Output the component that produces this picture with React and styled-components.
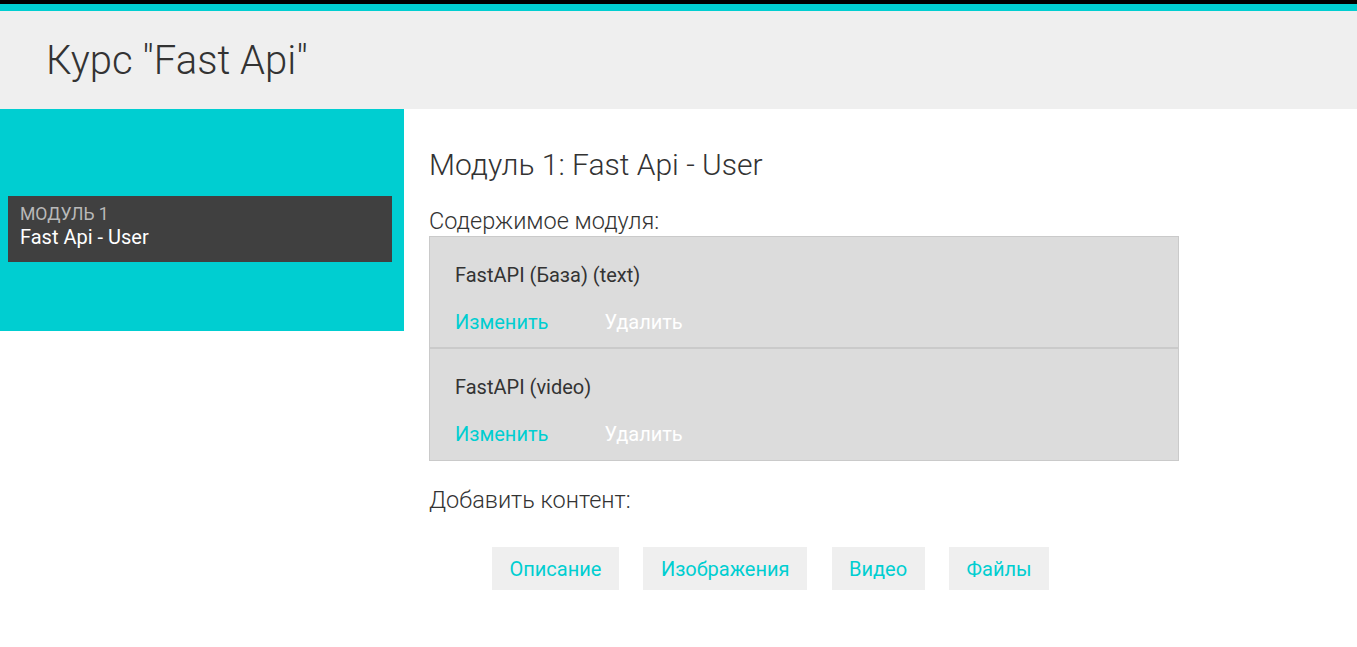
import React from "react";
import styled, { createGlobalStyle } from "styled-components";

const Global = createGlobalStyle`
  html, body { margin: 0; padding: 0; background: #fff; }
  body { font-family: Roboto, "Noto Sans", sans-serif; color: #333; }
  * { box-sizing: border-box; }
`;

const CYAN = "#00ced1";

const Page = styled.div`
  border-top: 4px solid #000;
  min-height: 647px;
`;

const Header = styled.header`
  border-top: 7px solid ${CYAN};
  background: #efefef;
  height: 105px;
  display: flex;
  align-items: center;
  padding-left: 46px;
`;

const Title = styled.h1`
  margin: 0;
  font-weight: 300;
  font-size: 40px;
  color: #333;
`;

const Body = styled.div`
  display: flex;
  align-items: flex-start;
`;

const Sidebar = styled.aside`
  width: 404px;
  flex: none;
  height: 222px;
  background: ${CYAN};
  padding: 87px 12px 0 8px;
`;

const ModuleCard = styled.div`
  background: #404040;
  height: 66px;
  padding: 8px 12px 0;
  display: flex;
  flex-direction: column;
`;

const ModuleLabel = styled.span`
  color: #b9b9b9;
  font-size: 17.6px;
  line-height: 21px;
`;

const ModuleName = styled.span`
  color: #fff;
  font-size: 20px;
  line-height: 25px;
`;

const Main = styled.main`
  padding: 37px 0 0 25px;
  width: 1000px;
`;

const Heading = styled.h2`
  margin: 0;
  font-weight: 300;
  font-size: 30px;
  line-height: 38px;
  color: #333;
`;

const Label = styled.div`
  font-weight: 300;
  font-size: 23.5px;
  line-height: 29px;
  color: #333;
  margin-top: ${(p) => p.$mt}px;
`;

const ContentBox = styled.div`
  width: 750px;
  background: #dcdcdc;
  border: 1px solid #cacaca;
`;

const Item = styled.div`
  height: ${(p) => p.$h}px;
  padding: 25px 25px 0;
  & + & {
    border-top: 2px solid #cacaca;
  }
`;

const ItemTitle = styled.div`
  font-size: 20px;
  line-height: 26px;
  color: #333;
`;

const Actions = styled.div`
  display: flex;
  gap: 56px;
  margin-top: 21px;
`;

const ActionLink = styled.a`
  font-size: 20px;
  line-height: 26px;
  color: ${(p) => (p.$danger ? "#fff" : CYAN)};
  text-decoration: none;
  cursor: pointer;
`;

const ButtonRow = styled.div`
  display: flex;
  gap: 24.5px;
  padding-left: 63px;
  margin-top: 32px;
`;

const AddButton = styled.button`
  height: 43px;
  padding: 0 17.5px;
  border: none;
  background: #efefef;
  color: ${CYAN};
  font-family: Roboto, sans-serif;
  font-size: 20px;
  cursor: pointer;
`;

const items = [
  { title: "FastAPI (База) (text)", h: 110 },
  { title: "FastAPI (video)", h: 113 },
];

export default function App() {
  return (
    <>
      <Global />
      <Page>
        <Header>
          <Title>Курс "Fast Api"</Title>
        </Header>
        <Body>
          <Sidebar>
            <ModuleCard>
              <ModuleLabel>МОДУЛЬ 1</ModuleLabel>
              <ModuleName>Fast Api - User</ModuleName>
            </ModuleCard>
          </Sidebar>
          <Main>
            <Heading>Модуль 1: Fast Api - User</Heading>
            <Label $mt={23}>Содержимое модуля:</Label>
            <ContentBox>
              {items.map((it) => (
                <Item key={it.title} $h={it.h}>
                  <ItemTitle>{it.title}</ItemTitle>
                  <Actions>
                    <ActionLink>Изменить</ActionLink>
                    <ActionLink $danger>Удалить</ActionLink>
                  </Actions>
                </Item>
              ))}
            </ContentBox>
            <Label $mt={25}>Добавить контент:</Label>
            <ButtonRow>
              <AddButton>Описание</AddButton>
              <AddButton>Изображения</AddButton>
              <AddButton>Видео</AddButton>
              <AddButton>Файлы</AddButton>
            </ButtonRow>
          </Main>
        </Body>
      </Page>
    </>
  );
}
